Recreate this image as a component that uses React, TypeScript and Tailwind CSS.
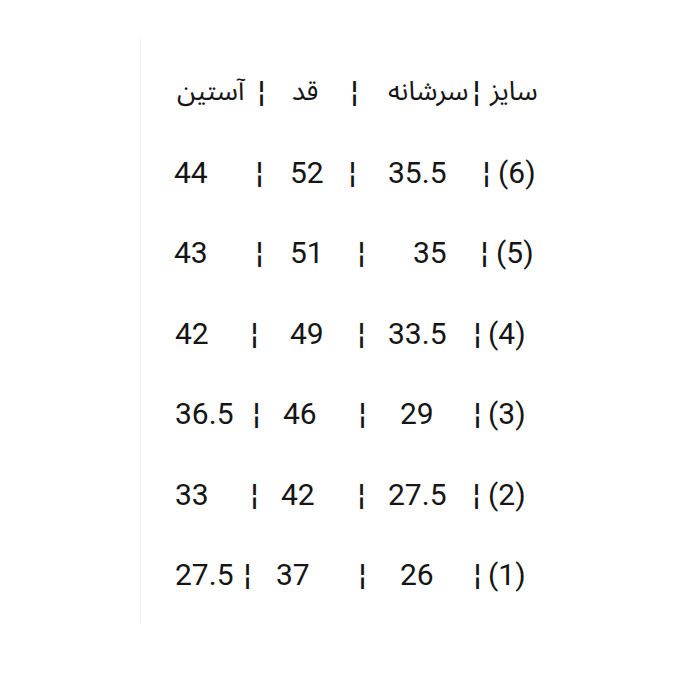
// each cell: text + its width class (last cell sizes itself)
type Cell = [string, string];

const header: Cell[] = [
  ["آستین", "w-[81px]"],
  ["¦", "w-[34px]"],
  ["قد", "w-[59px]"],
  ["¦", "w-[37px]"],
  ["سرشانه", "w-[85px]"],
  ["¦", "w-[17px]"],
  ["سایز", ""],
];

const rows: { lead: string; cells: Cell[] }[] = [
  { lead: "pl-[33px]", cells: [["44", "w-[82px]"], ["¦", "w-[34px]"], ["52", "w-[59px]"], ["¦", "w-[39px]"], ["35.5", "w-[95px]"], ["¦", "w-[15px]"], ["(6)", ""]] },
  { lead: "pl-[33px]", cells: [["43", "w-[82px]"], ["¦", "w-[34px]"], ["51", "w-[68px]"], ["¦", "w-[55px]"], ["35", "w-[68px]"], ["¦", "w-[15px]"], ["(5)", ""]] },
  { lead: "pl-[34px]", cells: [["42", "w-[76px]"], ["¦", "w-[39px]"], ["49", "w-[68px]"], ["¦", "w-[30px]"], ["33.5", "w-[86px]"], ["¦", "w-[14px]"], ["(4)", ""]] },
  { lead: "pl-[34px]", cells: [["36.5", "w-[78px]"], ["¦", "w-[30px]"], ["46", "w-[76px]"], ["¦", "w-[41px]"], ["29", "w-[74px]"], ["¦", "w-[14px]"], ["(3)", ""]] },
  { lead: "pl-[34px]", cells: [["33", "w-[76px]"], ["¦", "w-[30px]"], ["42", "w-[77px]"], ["¦", "w-[30px]"], ["27.5", "w-[85px]"], ["¦", "w-[15px]"], ["(2)", ""]] },
  { lead: "pl-[34px]", cells: [["27.5", "w-[69px]"], ["¦", "w-[32px]"], ["37", "w-[83px]"], ["¦", "w-[41px]"], ["26", "w-[74px]"], ["¦", "w-[14px]"], ["(1)", ""]] },
];

const Row = ({ lead, cells, arabic }: { lead: string; cells: Cell[]; arabic?: boolean }) => (
  <div className={`flex h-[80.5px] items-center whitespace-nowrap leading-[80.5px] ${lead}`}>
    {cells.map(([t, w], i) => (
      <span
        key={i}
        className={`shrink-0 ${w} ${
          arabic && t !== "¦" ? "font-['Noto_Sans_Arabic','Noto_Naskh_Arabic','DejaVu_Sans',sans-serif] text-[27px]" : ""
        }`}
      >
        {t}
      </span>
    ))}
  </div>
);

export default function App() {
  return (
    <div className="h-[700px] w-[700px] bg-white pt-[38px]">
      <div className="ml-[140px] h-[585px] w-[430px] border-l border-[#f1f1f1] pt-[14px] font-['Roboto','DejaVu_Sans',sans-serif] text-[30px] text-[#151515]">
        <Row lead="pl-[36px]" cells={header} arabic />
        {rows.map((r, i) => (
          <Row key={i} lead={r.lead} cells={r.cells} />
        ))}
      </div>
    </div>
  );
}
